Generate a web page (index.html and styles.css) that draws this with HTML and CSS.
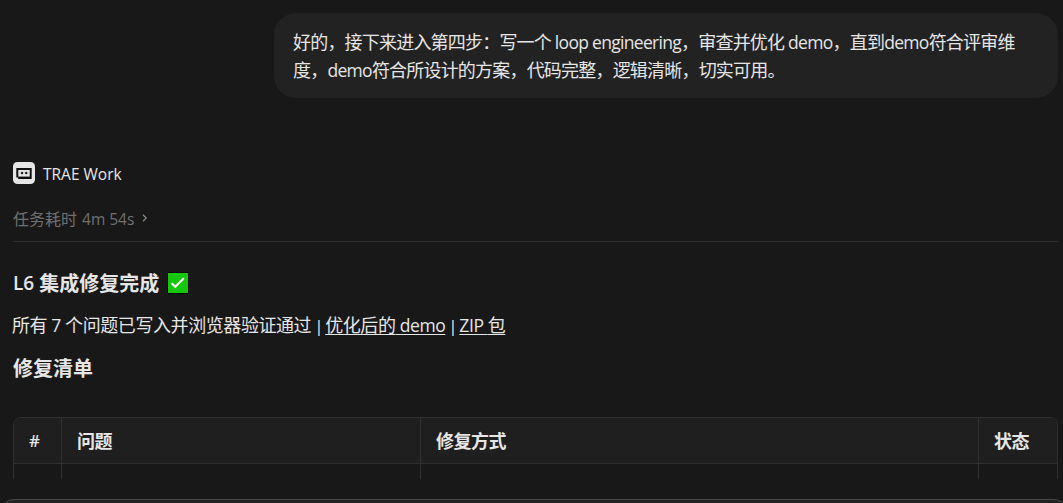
FILE: index.html
```html
<!DOCTYPE html>
<html lang="zh-CN">
<head>
<meta charset="utf-8">
<title>TRAE Work</title>
<link rel="stylesheet" href="styles.css">
</head>
<body>
<main class="chat">
  <div class="bubble">好的，接下来进入第四步：写一个<span class="en"> loop engineering</span>，审查并优化<span class="en"> demo</span>，直到<span class="en">demo</span>符合评审维<br>度，<span class="en">demo</span>符合所设计的方案，代码完整，逻辑清晰，切实可用。</div>
  <header class="agent">
    <svg class="agent-logo" viewBox="0 0 22 22" width="22" height="22">
      <rect width="22" height="22" rx="4.5" fill="#e6e6e6"/>
      <path d="M3.3 6h15.4v11H5.2v-1.6H3.3z" fill="#111"/>
      <path d="M5.3 8h11.4v6.6H5.3z" fill="#e6e6e6"/>
      <path d="M9 9.6l1.5 1.5L9 12.6 7.5 11.1zM13.2 9.6l1.5 1.5-1.5 1.5-1.5-1.5z" fill="#111"/>
    </svg>
    <span class="agent-name">TRAE Work</span>
  </header>
  <div class="duration"><span>任务耗时</span><span class="time">4m 54s</span>
    <svg class="chevron" viewBox="0 0 6 8" width="6" height="8"><path d="M1 .8L4.2 4 1 7.2" fill="none" stroke="#858585" stroke-width="1.3"/></svg>
  </div>
  <h2 class="title"><span class="title-en">L6</span><span>集成修复完成</span>
    <svg class="check" viewBox="0 0 22 22" width="22" height="22"><rect width="22" height="22" fill="#050505"/><rect x="1" y="1" width="20" height="20" fill="#16c60c"/><path d="M4.7 11.2l3.6 3.6 8.5-8.6" fill="none" stroke="#fff" stroke-width="2"/></svg>
  </h2>
  <p class="summary">所有<span class="en"> 7 </span>个问题已写入并浏览器验证通过<span class="bar"> | </span><a class="link">优化后的<span class="en"> demo</span></a><span class="bar"> | </span><a class="link"><span class="en">ZIP </span>包</a></p>
  <h2 class="subtitle">修复清单</h2>
  <div class="table-clip">
    <div class="table">
      <div class="cell head hash">#</div><div class="cell head">问题</div><div class="cell head">修复方式</div><div class="cell head">状态</div>
      <div class="cell"></div><div class="cell"></div><div class="cell"></div><div class="cell"></div>
    </div>
  </div>
  <div class="composer"></div>
</main>
</body>
</html>
```
FILE: styles.css
```css
* { box-sizing: border-box; }
body {
  margin: 0;
  background: #181818;
  color: #e6e6e6;
  font-family: "Open Sans", "Noto Sans CJK SC", sans-serif;
}
.chat {
  height: 503px;
  overflow: hidden;
  padding: 13px 5px 0 0;
  display: flex;
  flex-direction: column;
}
.chat > * { flex-shrink: 0; }
.bubble {
  align-self: flex-end;
  width: 784px;
  height: 85px;
  padding: 14px 19px;
  border-radius: 22px;
  background: #222;
  font: 18px/28px "Noto Sans CJK SC", sans-serif;
  letter-spacing: -0.8px;
  white-space: nowrap;
}
.en {
  font-family: "Open Sans", sans-serif;
  font-size: 17.5px;
  line-height: 1;
  letter-spacing: -0.7px;
}
.agent {
  display: flex;
  align-items: center;
  gap: 8px;
  height: 24px;
  margin: 63px 0 0 13px;
}
.agent-name { padding-top: 2px; font-size: 15.5px; }
.duration {
  display: flex;
  align-items: center;
  gap: 5px;
  height: 57px;
  margin: 0 0 0 13px;
  padding-top: 12px;
  border-bottom: 1px solid #2d2d2d;
  color: #707070;
  font-size: 16px;
  line-height: 22px;
}
.time { font-size: 15.5px; }
.chevron { margin: 0 0 2px 3px; }
.title, .subtitle {
  display: flex;
  align-items: center;
  margin: 0 0 0 13px;
  height: 30px;
  font: 700 20px/30px "Noto Sans CJK SC", sans-serif;
}
.title { margin-top: 26px; gap: 8px; }
.title-en { font-family: "Open Sans", sans-serif; font-weight: 600; font-size: 19px; margin-right: -3px; }
.summary {
  margin: 12px 0 0 12px;
  height: 28px;
  font: 18px/28px "Noto Sans CJK SC", sans-serif;
  letter-spacing: -0.42px;
  white-space: nowrap;
}
.summary .en { letter-spacing: -0.4px; }
.bar { font-family: "Open Sans", sans-serif; font-size: 17px; line-height: 1; letter-spacing: -1.4px; }
.link { text-decoration: underline; text-decoration-thickness: 1px; text-underline-offset: 2px; }
.subtitle { margin-top: 15px; }
.table-clip { height: 62px; margin: 34px 0 0 13px; overflow: hidden; }
.table {
  display: grid;
  grid-template-columns: 48px 359px 558px 1fr;
  grid-template-rows: 46px 46px;
  border: 1px solid #303030;
  border-radius: 8px;
  overflow: hidden;
}
.cell { border-right: 1px solid #303030; }
.cell:nth-child(4n) { border-right: 0; }
.head {
  padding: 0 15px;
  border-bottom: 1px solid #303030;
  background: #1f1f1f;
  font: 700 18px/45px "Noto Sans CJK SC", sans-serif;
  letter-spacing: -0.5px;
}
.hash { font-family: "Open Sans", sans-serif; font-size: 17px; font-weight: 600; }
.composer {
  height: 60px;
  margin: 20px -10px 0 0;
  border: 1px solid #484848;
  border-radius: 14px;
  background: #222;
}
```
